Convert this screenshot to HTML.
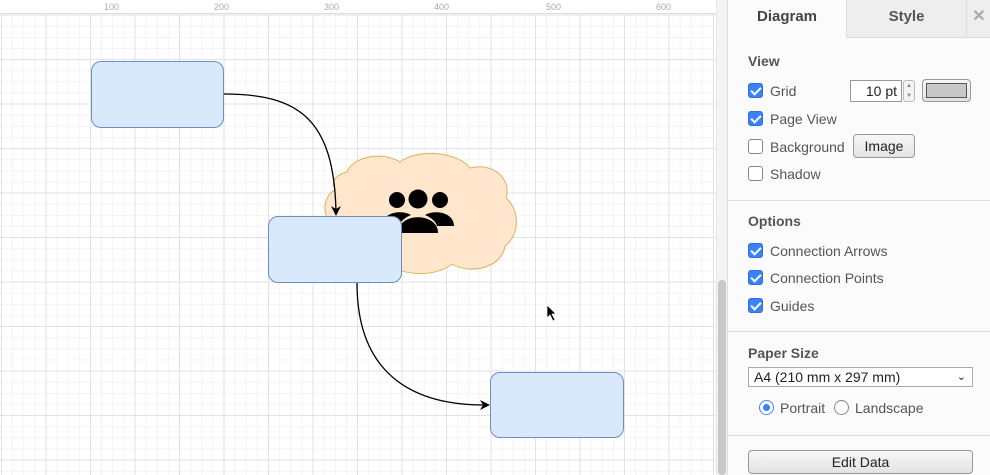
<!DOCTYPE html>
<html><head><meta charset="utf-8"><style>
*{margin:0;padding:0;box-sizing:border-box}
body{width:990px;height:475px;overflow:hidden;background:#fff;font-family:"Liberation Sans",sans-serif;position:relative;color:#333}
#canvas{position:absolute;left:0;top:0;width:716px;height:475px;
background-color:#fff;
background-image:
linear-gradient(to right,#e2e2e6 1px,transparent 1px),
linear-gradient(to bottom,#e2e2e6 1px,transparent 1px),
linear-gradient(to right,#f3f3f6 1px,transparent 1px),
linear-gradient(to bottom,#f3f3f6 1px,transparent 1px);
background-size:44.5px 44.5px,44.5px 44.5px,11.125px 11.125px,11.125px 11.125px;
background-position:1px 14.5px,1px 14.5px,1px 3.5px,1px 3.5px}
#ruler{position:absolute;left:0;top:0;width:726px;height:14px;background:#fff;border-bottom:1px solid #ddd;font-size:9px;color:#aaa}
#ruler span{position:absolute;top:2px}
#sb{position:absolute;left:716px;top:0;width:11px;height:475px;background:#f4f4f4;border-left:1px solid #e5e5e5}
#sb div{position:absolute;left:1px;top:280px;width:8px;height:195px;background:#c8c8c8;border-radius:4px}
.box{position:absolute;background:#dae8fc;border:1px solid #6c8ebf;border-radius:10px}
#panel{position:absolute;left:727px;top:0;width:263px;height:475px;background:#fbfbfb;border-left:1px solid #ddd;font-size:14px}
.tab{position:absolute;top:0;height:38px;font-weight:bold;font-size:15px;text-align:center;line-height:34px;color:#444}
.lbl{position:absolute;left:20px;font-weight:bold;color:#555;font-size:14px}
.row{position:absolute;left:20px;height:16px;line-height:16px;color:#555;font-size:14px}
.cb{position:absolute;left:0;top:0;width:15px;height:15px;border-radius:3px;border:1px solid #888;background:#fff}
.cb.on{background:#3b82f6;border-color:#2f6fd9}
.cb.on:after{content:"";position:absolute;left:4px;top:1px;width:4px;height:8px;border:solid #fff;border-width:0 2px 2px 0;transform:rotate(45deg)}
.row .t{position:absolute;left:22px;top:0;white-space:nowrap}
.sep{position:absolute;left:0;width:263px;height:1px;background:#ddd}
.btn{position:absolute;border:1px solid #999;border-radius:4px;background:linear-gradient(#f7f7f7,#e3e3e3);text-align:center;color:#222}
</style></head><body>
<div id="canvas"></div>
<div id="ruler">
<span style="left:104px">100</span><span style="left:214px">200</span><span style="left:324px">300</span><span style="left:434px">400</span><span style="left:546px">500</span><span style="left:656px">600</span>
</div>
<div id="sb"><div></div></div>
<svg style="position:absolute;left:0;top:0" width="716" height="475">
<path d="M347 172 C352 158 380 150 400 162 C418 148 458 152 470 168 C492 162 512 178 506 198 C520 210 520 235 505 246 C502 268 470 275 452 264 C435 278 400 276 385 262 C360 270 330 250 340 232 C322 222 320 198 335 190 C330 180 338 174 347 172 Z" fill="#ffe6cc" stroke="#d6b656" stroke-width="1"/>
<g fill="#000">
<circle cx="397" cy="200" r="8"/><circle cx="418" cy="199" r="9.5"/><circle cx="440" cy="200" r="8"/>
<path d="M382 226 C382 213 400 209 411 215 C404 218 400 222 399 226 Z"/>
<path d="M454 226 C454 213 436 209 425 215 C432 218 436 222 437 226 Z"/>
<path d="M398 233 C398 212 438 212 438 233 Z"/>
</g>
<path d="M224 94 C300 94 334 120 336 212" fill="none" stroke="#000" stroke-width="1.3"/>
<path d="M331 206 L336 216 L341 206 L336 209 Z" fill="#000"/>
<path d="M357 283 C357 380 420 405 484 405" fill="none" stroke="#000" stroke-width="1.3"/>
<path d="M480 400 L490 405 L480 410 L483 405 Z" fill="#000"/>
<path d="M547 305 L547 318 L550 315 L553 321 L555 320 L552 314 L556 314 Z" fill="#000" stroke="#fff" stroke-width="0.7"/>
</svg>
<div class="box" style="left:91px;top:61px;width:133px;height:67px"></div>
<div class="box" style="left:268px;top:216px;width:134px;height:67px"></div>
<div class="box" style="left:490px;top:372px;width:134px;height:66px"></div>

<div id="panel">
<div class="tab" style="left:0;width:118px;background:#fbfbfb">Diagram</div>
<div class="tab" style="left:118px;width:120px;background:#eee;border-left:1px solid #ddd;border-bottom:1px solid #ddd;color:#555">Style</div>
<div class="tab" style="left:238px;width:25px;background:#eee;border-left:1px solid #ddd;border-bottom:1px solid #ddd;color:#aaa;font-size:16px">✕</div>
<div class="lbl" style="top:53px">View</div>
<div class="row" style="top:83px"><div class="cb on"></div><div class="t">Grid</div></div>
<div style="position:absolute;left:122px;top:80px;width:52px;height:22px;border:1px solid #999;background:#fff;font-size:14px;text-align:right;padding-right:4px;line-height:20px;color:#222">10 pt</div>
<div style="position:absolute;left:175px;top:80px;width:12px;height:22px;border:1px solid #bbb;border-radius:3px;background:#f4f4f4;font-size:6px;color:#888;text-align:center;line-height:10px">▲<br>▼</div>
<div class="btn" style="left:194px;top:79px;width:49px;height:23px;padding:3px"><div style="width:100%;height:100%;background:#c8c8c8;border:1px solid #555"></div></div>
<div class="row" style="top:111px"><div class="cb on"></div><div class="t">Page View</div></div>
<div class="row" style="top:139px"><div class="cb"></div><div class="t">Background</div></div>
<div class="btn" style="left:125px;top:134px;width:62px;height:24px;line-height:22px;font-size:14px">Image</div>
<div class="row" style="top:166px"><div class="cb"></div><div class="t">Shadow</div></div>
<div class="sep" style="top:200px"></div>
<div class="lbl" style="top:213px">Options</div>
<div class="row" style="top:243px"><div class="cb on"></div><div class="t">Connection Arrows</div></div>
<div class="row" style="top:270px"><div class="cb on"></div><div class="t">Connection Points</div></div>
<div class="row" style="top:298px"><div class="cb on"></div><div class="t">Guides</div></div>
<div class="sep" style="top:331px"></div>
<div class="lbl" style="top:345px">Paper Size</div>
<div style="position:absolute;left:20px;top:367px;width:225px;height:20px;border:1px solid #aaa;background:#fff;font-size:14px;line-height:18px;padding-left:5px;color:#222">A4 (210 mm x 297 mm)<span style="position:absolute;right:6px;top:0;font-size:11px">⌄</span></div>
<div style="position:absolute;left:31px;top:400px;width:15px;height:15px;border-radius:50%;border:1px solid #3b82f6;background:#fff"><div style="position:absolute;left:3px;top:3px;width:7px;height:7px;border-radius:50%;background:#3b82f6"></div></div>
<div style="position:absolute;left:52px;top:400px;color:#555">Portrait</div>
<div style="position:absolute;left:106px;top:400px;width:15px;height:15px;border-radius:50%;border:1px solid #888;background:#fff"></div>
<div style="position:absolute;left:127px;top:400px;color:#555">Landscape</div>
<div class="sep" style="top:435px"></div>
<div class="btn" style="left:20px;top:450px;width:225px;height:24px;line-height:22px">Edit Data</div>
</div>
</body></html>
